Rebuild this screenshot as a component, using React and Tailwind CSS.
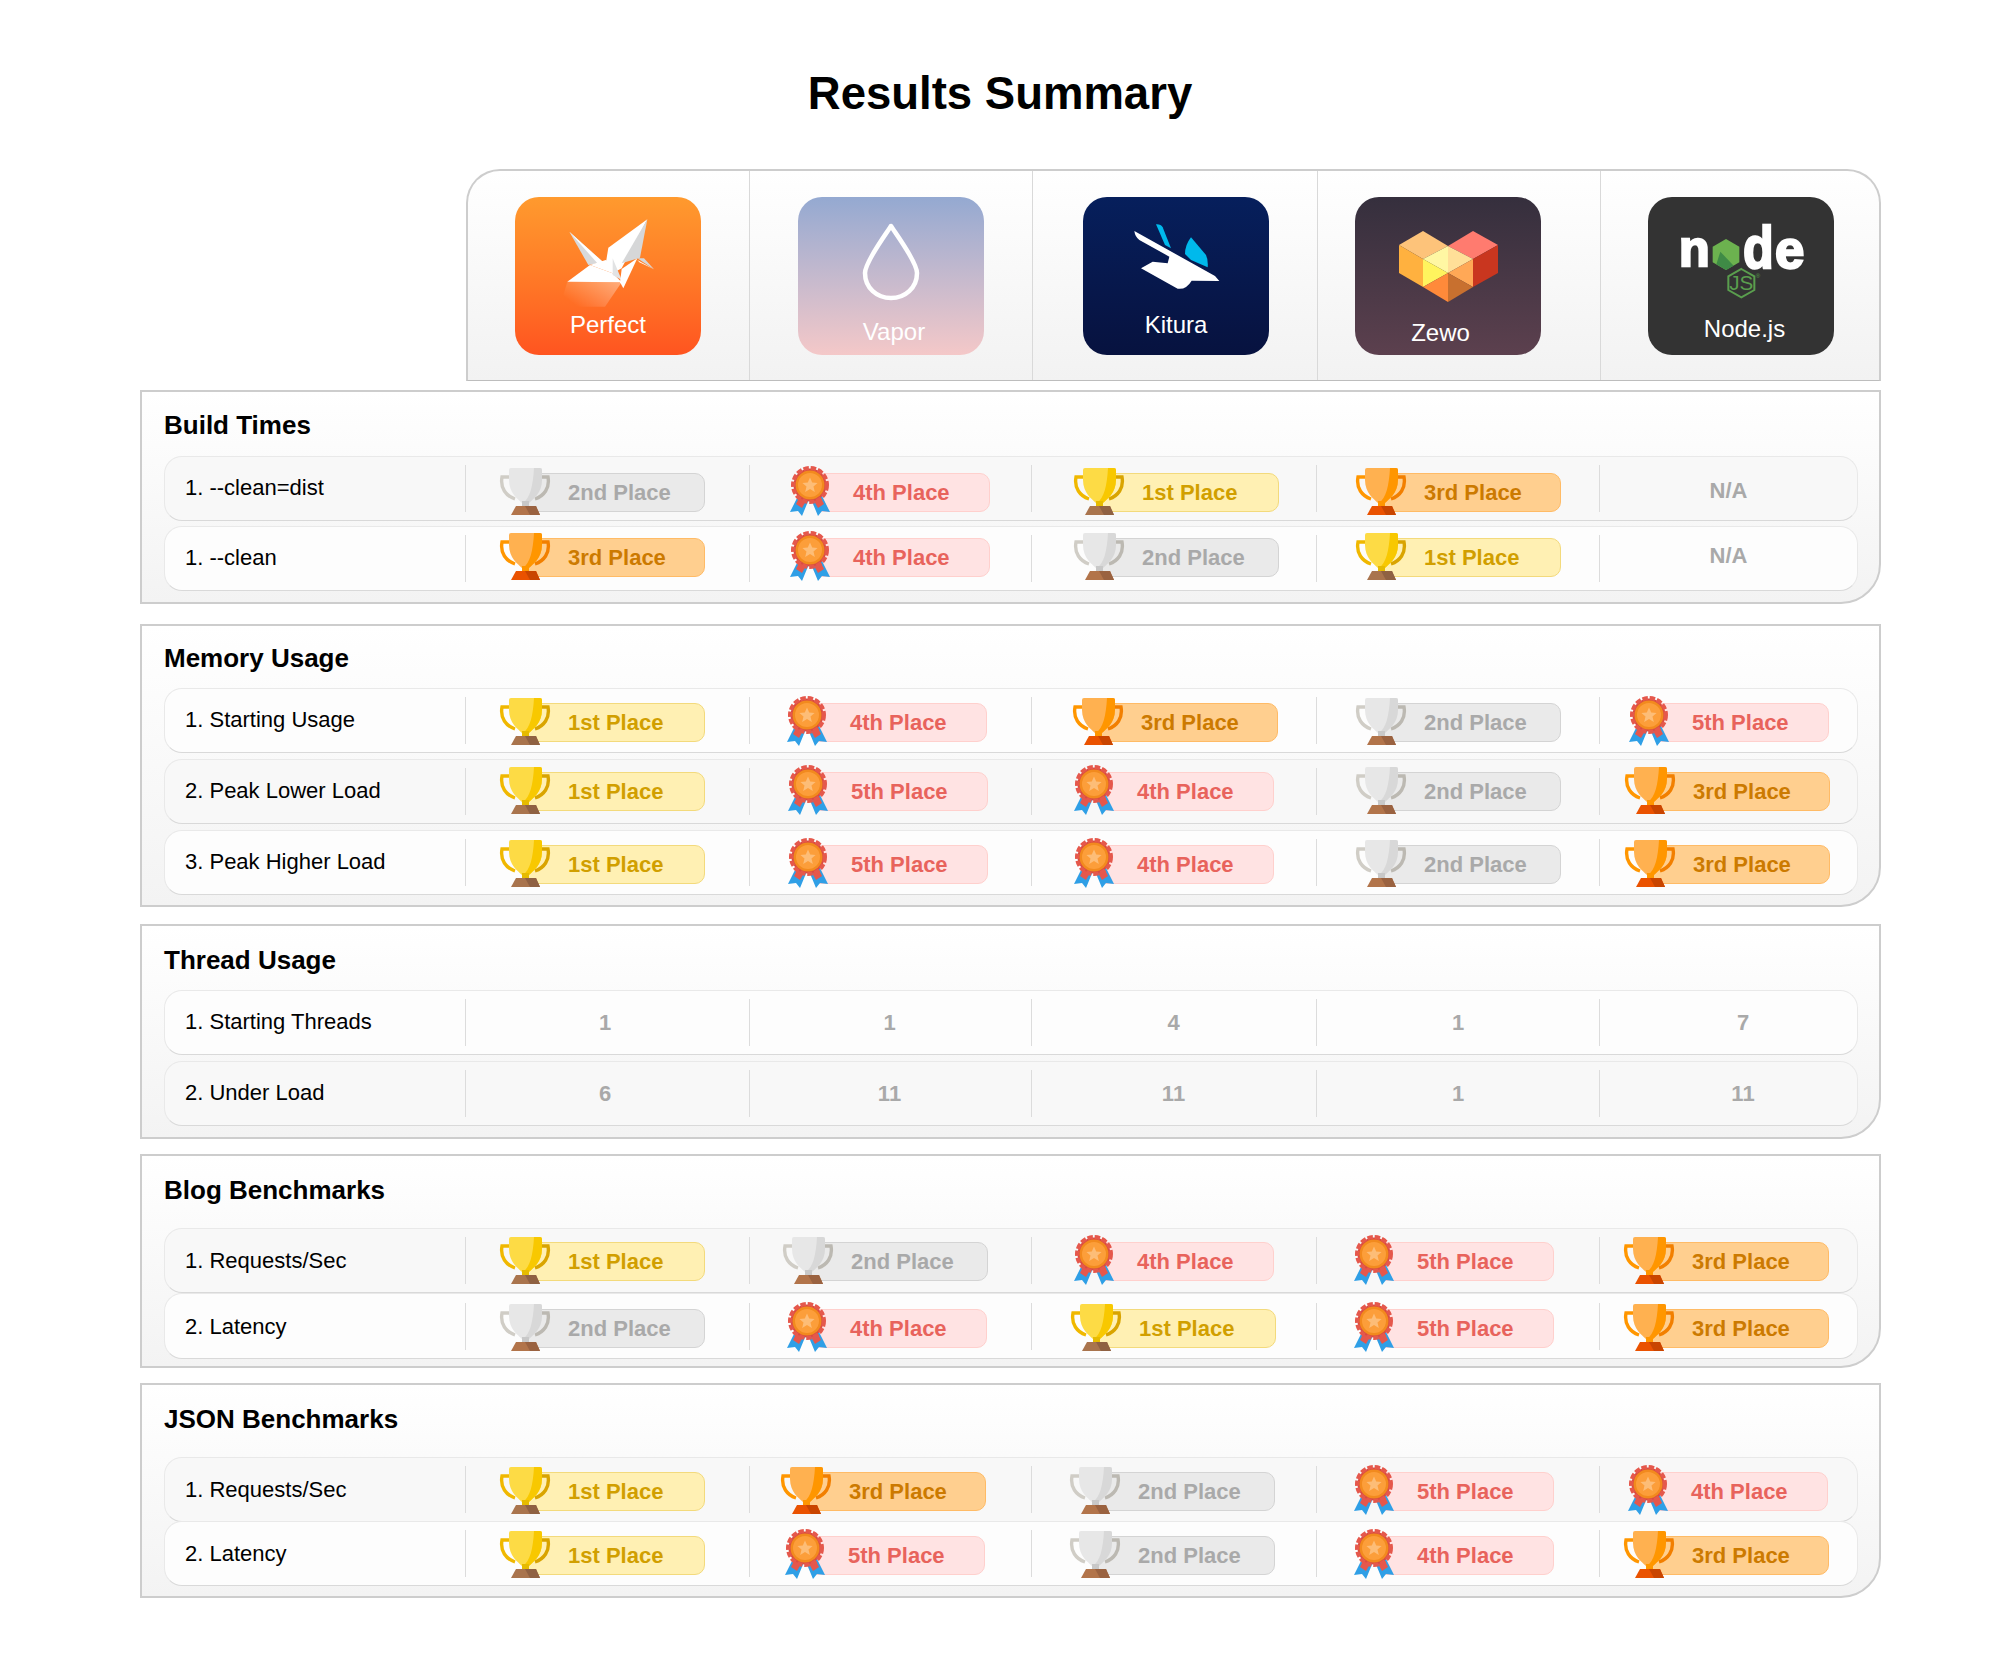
import React from 'react';

const TROPHY = {
    '1st': { light: '#fddb45', dark: '#f8c800', hl: '#f0b800', hr: '#d9a400', stem: '#e6bb00', b1: '#a9744d', b2: '#8f6142' },
    '2nd': { light: '#e7e7e7', dark: '#d8d8d8', hl: '#d0cdc6', hr: '#bcb9b2', stem: '#c8c8c8', b1: '#b2744a', b2: '#9a6240' },
    '3rd': { light: '#ffb150', dark: '#ff9600', hl: '#ff9600', hr: '#f27f00', stem: '#ff9600', b1: '#ea5200', b2: '#c94500' },
};

const PILL = {
    '1st': 'w-[180px] pl-[42px] bg-[#fff0b3] border-[#f3da7c] text-[#d19f00]',
    '2nd': 'w-[180px] pl-[42px] bg-[#eaeaea] border-[#d4d4d4] text-[#a9a9a9]',
    '3rd': 'w-[180px] pl-[42px] bg-[#ffcf8f] border-[#ffbb66] text-[#cc7a00]',
    '4th': 'w-[177px] pl-[39px] bg-[#ffe3e3] border-[#ffd0cd] text-[#e8635c]',
    '5th': 'w-[177px] pl-[39px] bg-[#ffe3e3] border-[#ffd0cd] text-[#e8635c]',
};

const Trophy = ({ place }) => {
    const c = TROPHY[place];
    return (
        <svg width="52" height="47" viewBox="0 0 52 47" className="relative z-10 shrink-0 mb-[2px] -mr-[26px]">
            <path d="M11 9 H3 C1 20 7 28 16 31" fill="none" stroke={c.hl} strokeWidth="3.4" />
            <path d="M41 9 H49 C51 20 45 28 36 31" fill="none" stroke={c.hr} strokeWidth="3.4" />
            <path d="M10 2 Q10 0 12 0 H41 Q43 0 43 2 V12 C43 25 34 31 30 35 V39 H23 V35 C19 31 10 25 10 12 Z" fill={c.light} />
            <path d="M35 0 H41 Q43 0 43 2 V12 C43 25 34 31 30 35 H24 C31 30 34 18 35 0 Z" fill={c.dark} />
            <rect x="23" y="33" width="7" height="6" fill={c.stem} />
            <polygon points="17,38 37,38 41,47 12,47" fill={c.b1} />
            <polygon points="26,38 37,38 41,47 31,47" fill={c.b2} />
        </svg>
    );
};

const Medal = () => (
    <svg width="40" height="50" viewBox="0 0 40 50" className="relative z-10 shrink-0 mb-[3px] -mr-[17px]">
        <polygon points="8,30 0,46 8,45 12,50 19,33" fill="#2f9fe6" />
        <polygon points="32,30 40,46 32,45 28,50 21,33" fill="#2f9fe6" />
        <polygon points="10,30 6,38 12,42 17,33" fill="#e5574c" />
        <polygon points="30,30 34,38 28,42 23,33" fill="#e5574c" />
        <circle cx="20" cy="19" r="16.5" fill="#d94c40" />
        <circle cx="20" cy="19" r="17" fill="none" stroke="#e5584c" strokeWidth="4" strokeDasharray="5.4 1.9" />
        <circle cx="20" cy="19" r="14.5" fill="#f28a1e" />
        <circle cx="20" cy="19" r="12" fill="#fc9e3a" />
        <polygon points="20,11.5 22.2,16.6 27.6,17 23.5,20.6 24.8,26 20,23.1 15.2,26 16.5,20.6 12.4,17 17.8,16.6" fill="#fdbd77" />
    </svg>
);

// one result badge: icon sitting over the left end of the pill
const Badge = ({ place, className }) => {
    const isMedal = place === '4th' || place === '5th';
    return (
        <div className={`flex items-center ${className}`}>
            {isMedal ? <Medal /> : <Trophy place={place} />}
            <div className={`h-[39px] rounded-[10px] border flex items-center text-[22px] font-bold whitespace-nowrap ${PILL[place]}`}>
                {place} Place
            </div>
        </div>
    );
};

const b = (place, className) => ({ place, className });
const v = (value, className) => ({ value, className });

const SECTIONS = [
    {
        title: 'Build Times', mt: 'mt-[9px]', hdr: 'h-[64px] pt-[19px]', pb: 'pb-[11px]', lb: 'mb-[2px]',
        rows: [
            { label: '1. --clean=dist', tone: 'bg-[#f8f8f8]', h: 'h-[65px]', cells: [b('2nd', 'ml-[33px] mt-[8px]'), b('4th', 'ml-[40px] mt-[8px]'), b('1st', 'ml-[41px] mt-[8px]'), b('3rd', 'ml-[38px] mt-[8px]'), v('N/A', 'mt-[4px]')] },
            { label: '1. --clean', tone: 'bg-[#fdfdfd]', h: 'h-[65px] mt-[5px]', cells: [b('3rd', 'ml-[33px] mb-[2px]'), b('4th', 'ml-[40px] mb-[2px]'), b('2nd', 'ml-[41px] mb-[2px]'), b('1st', 'ml-[38px] mb-[2px]'), v('N/A', 'mb-[6px]')] },
        ],
    },
    {
        title: 'Memory Usage', mt: 'mt-[20px]', hdr: 'h-[62px] pt-[18px]', pb: 'pb-[10px]', lb: 'mb-[2px]',
        rows: [
            { label: '1. Starting Usage', tone: 'bg-[#fdfdfd]', h: 'h-[65px]', cells: [b('1st', 'ml-[33px] mt-[4px]'), b('4th', 'ml-[37px] mt-[4px]'), b('3rd', 'ml-[40px] mt-[4px]'), b('2nd', 'ml-[38px] mt-[4px]'), b('5th', 'ml-[29px] mt-[4px]')] },
            { label: '2. Peak Lower Load', tone: 'bg-[#f8f8f8]', h: 'h-[65px] mt-[6px]', cells: [b('1st', 'ml-[33px]'), b('5th', 'ml-[38px]'), b('4th', 'ml-[42px]'), b('2nd', 'ml-[38px]'), b('3rd', 'ml-[24px]')] },
            { label: '3. Peak Higher Load', tone: 'bg-[#fdfdfd]', h: 'h-[65px] mt-[6px]', cells: [b('1st', 'ml-[33px] mt-[3px]'), b('5th', 'ml-[38px] mt-[3px]'), b('4th', 'ml-[42px] mt-[3px]'), b('2nd', 'ml-[38px] mt-[3px]'), b('3rd', 'ml-[24px] mt-[3px]')] },
        ],
    },
    {
        title: 'Thread Usage', mt: 'mt-[17px]', hdr: 'h-[64px] pt-[20px]', pb: 'pb-[11px]', lb: 'mb-[2px]',
        rows: [
            { label: '1. Starting Threads', tone: 'bg-[#fdfdfd]', h: 'h-[65px]', cells: [v('1', 'pr-[5px]'), v('1', 'pr-[2px]'), v('4', 'pr-[1px]'), v('1'), v('7', 'pl-[29px]')] },
            { label: '2. Under Load', tone: 'bg-[#f8f8f8]', h: 'h-[65px] mt-[6px]', cells: [v('6', 'pr-[5px]'), v('11', 'pr-[2px]'), v('11', 'pr-[1px]'), v('1'), v('11', 'pl-[29px]')] },
        ],
    },
    {
        title: 'Blog Benchmarks', mt: 'mt-[15px]', hdr: 'h-[72px] pt-[20px]', pb: 'pb-[7px]', lb: 'mb-0',
        rows: [
            { label: '1. Requests/Sec', tone: 'bg-[#f8f8f8]', h: 'h-[65px]', cells: [b('1st', 'ml-[33px] mt-[2px]'), b('2nd', 'ml-[32px] mt-[2px]'), b('4th', 'ml-[42px] mt-[2px]'), b('5th', 'ml-[37px] mt-[2px]'), b('3rd', 'ml-[23px] mt-[2px]')] },
            { label: '2. Latency', tone: 'bg-[#fdfdfd]', h: 'h-[66px]', cells: [b('2nd', 'ml-[33px] mt-[4px]'), b('4th', 'ml-[37px] mt-[4px]'), b('1st', 'ml-[38px] mt-[4px]'), b('5th', 'ml-[37px] mt-[4px]'), b('3rd', 'ml-[23px] mt-[4px]')] },
        ],
    },
    {
        title: 'JSON Benchmarks', mt: 'mt-[15px]', hdr: 'h-[72px] pt-[20px]', pb: 'pb-[10px]', lb: 'mb-0',
        rows: [
            { label: '1. Requests/Sec', tone: 'bg-[#f8f8f8]', h: 'h-[65px]', cells: [b('1st', 'ml-[33px] mt-[3px]'), b('3rd', 'ml-[30px] mt-[3px]'), b('2nd', 'ml-[37px] mt-[3px]'), b('5th', 'ml-[37px] mt-[3px]'), b('4th', 'ml-[28px] mt-[3px]')] },
            { label: '2. Latency', tone: 'bg-[#fdfdfd]', h: 'h-[65px] -mt-[1px]', cells: [b('1st', 'ml-[33px] mt-[4px]'), b('5th', 'ml-[35px] mt-[4px]'), b('2nd', 'ml-[37px] mt-[4px]'), b('4th', 'ml-[37px] mt-[4px]'), b('3rd', 'ml-[23px] mt-[4px]')] },
        ],
    },
];

const CELL_W = ['w-[284px]', 'w-[282px]', 'w-[285px]', 'w-[283px]', 'flex-1'];

const Row = ({ row, lb }) => (
    <div className={`flex items-center rounded-[18px] border border-[#e9e9e9] border-b-[#d9d9d9] ${row.tone} ${row.h}`}>
        <div className={`w-[300px] pl-[20px] text-[22px] text-black ${lb}`}>{row.label}</div>
        {row.cells.map((cell, i) => (
            <div key={i} className={`h-[47px] flex items-center border-l border-[#dcdcdc] ${CELL_W[i]}`}>
                {cell.place
                    ? <Badge place={cell.place} className={cell.className} />
                    : <div className={`w-full text-center text-[22px] font-bold text-[#a9a9a9] ${cell.className || ''}`}>{cell.value}</div>}
            </div>
        ))}
    </div>
);

const Section = ({ section }) => (
    <section className={`border-2 border-[#cdcdcd] rounded-br-[40px] pl-[22px] pr-[21px] bg-gradient-to-b from-white to-[#f3f3f3] ${section.mt} ${section.pb}`}>
        <div className={section.hdr}>
            <h2 className="text-[26px] leading-[28px] font-bold text-black">{section.title}</h2>
        </div>
        {section.rows.map((row) => <Row key={row.label} row={row} lb={section.lb} />)}
    </section>
);

const Tile = ({ bg, pt, label, labelClass, children }) => (
    <div className={`w-[186px] h-[158px] rounded-[24px] flex flex-col items-center shrink-0 ${bg} ${pt}`}>
        {children}
        <div className={`text-[24px] leading-[28px] text-white ${labelClass}`}>{label}</div>
    </div>
);

const Crane = () => (
    <svg width="140" height="102" viewBox="0 0 420 306" className="ml-[3px]">
        <defs>
            <linearGradient id="craneShade" x1="1" y1="0" x2="0" y2="0.6">
                <stop offset="0" stopColor="#fff" stopOpacity="0.4" />
                <stop offset="1" stopColor="#fff" stopOpacity="0" />
            </linearGradient>
        </defs>
        <polygon points="82,230 245,232 195,305 110,305 70,270" fill="url(#craneShade)" />
        <polygon points="88,80 190,172 145,180" fill="#d8d9da" />
        <polygon points="88,80 190,172 175,178" fill="#fff" />
        <polygon points="197,165 245,190 218,205 150,180" fill="#fff" />
        <polygon points="322,43 205,128 197,178 245,190" fill="#fff" />
        <polygon points="322,43 245,175 300,158" fill="#d6d7d8" />
        <polygon points="82,230 150,180 218,205 245,232" fill="#fff" />
        <polygon points="218,160 245,225 218,210" fill="#e2e3e4" />
        <polygon points="245,192 292,160 250,250 240,232" fill="#fff" />
        <polygon points="292,160 342,193 312,160" fill="#d6d7d8" />
        <polygon points="292,165 342,193 298,172" fill="#fff" />
    </svg>
);

const Drop = () => (
    <svg width="62" height="80" viewBox="0 0 62 80">
        <path d="M31 4 C26 12 5 40 5 51 C5 66 17 76 31 76 C45 76 57 66 57 51 C57 40 36 12 31 4 Z" fill="none" stroke="#fff" strokeWidth="4.5" strokeLinejoin="round" />
    </svg>
);

const KituraBird = () => (
    <svg width="130" height="80" viewBox="0 0 390 240">
        <path d="M135 43 Q150 42 155 52 L180 115 L162 105 Z" fill="#00b9ec" />
        <path d="M240 82 L285 135 Q292 150 290 172 L240 150 L222 132 Q222 105 240 82 Z" fill="#00b9ec" />
        <path d="M70 63 L312 198 L325 213 L242 212 Q225 240 200 236 L90 175 L125 155 L170 160 L175 140 L85 90 Q72 80 70 63 Z" fill="#fff" />
    </svg>
);

const Heart = () => (
    <svg width="99" height="71" viewBox="0 0 99 71">
        <polygon points="0,14 24,0 49,15 24,28" fill="#fdc37a" />
        <polygon points="49,15 74,0 99,14 74,28" fill="#ff7b6f" />
        <polygon points="49,15 49,42 24,28" fill="#fff7a3" />
        <polygon points="49,15 74,28 49,42" fill="#ffdf98" />
        <polygon points="0,14 24,28 24,56 0,42" fill="#ffb13f" />
        <polygon points="24,28 49,42 24,56" fill="#fff45e" />
        <polygon points="49,42 74,28 74,56" fill="#ffa856" />
        <polygon points="74,28 99,14 99,42 74,56" fill="#c9361f" />
        <polygon points="24,56 49,42 49,71" fill="#ff8a3a" />
        <polygon points="49,42 74,56 49,71" fill="#c8702f" />
    </svg>
);

// wordmark stays real text, only the hexagons are drawn
const NodeMark = () => (
    <svg width="140" height="85" viewBox="0 0 420 255" fontFamily="'Liberation Sans', sans-serif" className="overflow-visible">
        <text x="24" y="152" fontSize="150" fontWeight="700" fill="#fff" stroke="#fff" strokeWidth="7" textLength="92" lengthAdjust="spacingAndGlyphs">n</text>
        <polygon points="165,72 205,95 205,142 165,165 125,142 125,95" fill="#6cb24f" />
        <polygon points="148,110 188,152 165,165 136,148" fill="#3f8b46" />
        <text x="216" y="160" fontSize="178" fontWeight="700" fill="#fff" stroke="#fff" strokeWidth="7" textLength="92" lengthAdjust="spacingAndGlyphs">d</text>
        <text x="312" y="160" fontSize="160" fontWeight="700" fill="#fff" stroke="#fff" strokeWidth="7" textLength="88" lengthAdjust="spacingAndGlyphs">e</text>
        <polygon points="211,162 250,184 250,225 211,247 172,225 172,184" fill="none" stroke="#5a9e4e" strokeWidth="6" />
        <text x="211" y="226" fontSize="62" fontWeight="400" fill="#5a9e4e" textAnchor="middle">JS</text>
        <text x="254" y="190" fontSize="18" fill="#5a9e4e">®</text>
    </svg>
);

const Header = () => (
    <div className="ml-[326px] h-[212px] flex rounded-t-[34px] border-2 border-b border-[#cdcdcd] border-b-[#bdbdbd] bg-gradient-to-b from-white to-[#f2f2f2]">
        <div className="w-[281px] pl-[47px] pt-[26px]">
            <Tile bg="bg-gradient-to-b from-[#ff9a2e] to-[#ff5420]" pt="pt-[8px]" label="Perfect" labelClass="mt-[4px]"><Crane /></Tile>
        </div>
        <div className="w-[283px] pl-[48px] pt-[26px] border-l border-[#d9d9d9]">
            <Tile bg="bg-gradient-to-b from-[#94a9d1] to-[#f4c8c8]" pt="pt-[25px]" label="Vapor" labelClass="mt-[16px] ml-[6px]"><Drop /></Tile>
        </div>
        <div className="w-[285px] pl-[50px] pt-[26px] border-l border-[#d9d9d9]">
            <Tile bg="bg-gradient-to-b from-[#061f5c] to-[#07123f]" pt="pt-[13px]" label="Kitura" labelClass="mt-[21px]"><KituraBird /></Tile>
        </div>
        <div className="w-[283px] pl-[37px] pt-[26px] border-l border-[#d9d9d9]">
            <Tile bg="bg-gradient-to-b from-[#352f3d] to-[#5c404e]" pt="pt-[34px]" label="Zewo" labelClass="mt-[17px] mr-[15px]"><Heart /></Tile>
        </div>
        <div className="flex-1 pl-[47px] pt-[26px] border-l border-[#d9d9d9]">
            <Tile bg="bg-[#333333]" pt="pt-[18px]" label="Node.js" labelClass="mt-[15px] ml-[7px]"><NodeMark /></Tile>
        </div>
    </div>
);

const App = () => (
    <div className="w-[2000px] min-h-[1673px] bg-white font-['Liberation_Sans',Arial,sans-serif]">
        <h1 className="h-[169px] pt-[68px] text-center text-[45.5px] leading-[52px] font-bold text-black">Results Summary</h1>
        <div className="ml-[140px] w-[1741px]">
            <Header />
            {SECTIONS.map((s) => <Section key={s.title} section={s} />)}
        </div>
    </div>
);

export default App;
